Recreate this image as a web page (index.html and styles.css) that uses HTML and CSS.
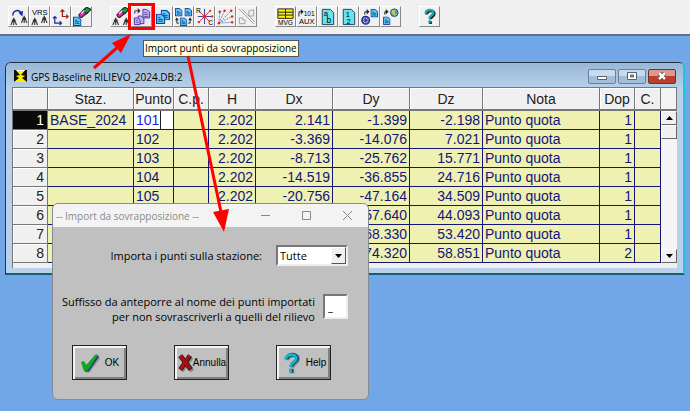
FILE: index.html
```html
<!DOCTYPE html>
<html lang="it">
<head>
    <meta charset="UTF-8">
    <meta name="viewport" content="width=device-width, initial-scale=1.0">
    <title>GPS Baseline RILIEVO_2024</title>
    <link rel="stylesheet" href="styles.css">
</head>
<body>
    <!-- shapes shared by several toolbar icons -->
    <svg class="symbols" aria-hidden="true">
        <symbol id="tripod" viewBox="0 0 8 8">
            <path d="M4 0V8M4 1L1 8M4 1L7 8M2 3H6" fill="none" stroke="#333" stroke-width="1.200"/>
        </symbol>
        <symbol id="eraser" viewBox="0 0 12 10">
            <path d="M1 7L6 2L9 5L4 9Q2 10 1 7Z" fill="#e622c4" stroke="#222" stroke-width="1"/>
            <path d="M5 3L8 0L12 2L8 6Z" fill="#18a040" stroke="#222" stroke-width="1"/>
            <path d="M3 6L6 3" stroke="#fff"/>
        </symbol>
        <symbol id="doc" viewBox="0 0 8 9">
            <path d="M.5 .5H5L7.500 3V8.500H.5Z" fill="#5cc8f4" stroke="#10409c"/>
            <path d="M2 3.500H4M2 5H6M2 6.500H6" stroke="#10409c" stroke-width=".8"/>
        </symbol>
    </svg>

    <div class="toolbar">
        <div class="group">
            <button class="tool" aria-label="Ruota stazioni">
                <svg viewBox="0 0 20 20"><use href="#tripod" x="1" y="11" width="8" height="8"/><use href="#tripod" x="12" y="9" width="8" height="8"/><path d="M4 9C4 3 11 2 13 7" fill="none" stroke="#10309c" stroke-width="1.500"/><path d="M10 6L14 10L15 4Z" fill="#10309c"/></svg>
            </button>
            <button class="tool" aria-label="VRS">
                <svg viewBox="0 0 20 20"><text x="2" y="8" font-size="8">VRS</text><use href="#tripod" x="1" y="11" width="8" height="8"/><use href="#tripod" x="11" y="9" width="8" height="8"/></svg>
            </button>
            <button class="tool" aria-label="Trasforma assi">
                <svg viewBox="0 0 20 20"><g fill="none" stroke-width="1.300"><path d="M4 10V17H11M2 12L4 10L6 12M9 15L11 17L9 19" stroke="#1c2c90"/><path d="M12 3V10H18M10 5L12 3L14 5M16 8L18 10L16 12" stroke="#a02020"/></g></svg>
            </button>
            <button class="tool" aria-label="Cancella documento">
                <svg viewBox="0 0 20 20"><use href="#doc" x="1" y="10" width="9" height="10"/><use href="#eraser" x="6" y="0" width="14" height="12"/></svg>
            </button>
        </div>
        <div class="group">
            <button class="tool" aria-label="Cancella stazioni">
                <svg viewBox="0 0 20 20"><use href="#tripod" x="1" y="11" width="8" height="8"/><use href="#tripod" x="12" y="11" width="8" height="8"/><use href="#eraser" x="5" y="0" width="14" height="12"/></svg>
            </button>
            <button class="tool marked" aria-label="Import punti da sovrapposizione" aria-describedby="tip">
                <svg viewBox="0 0 20 20"><g fill="#c4b4f0" stroke="#4830a0"><path d="M11.500 2.500H15L18.500 5V11.500H11.500ZM6.500 9.500H10L12.500 12V17.500H6.500Z"/><path d="M2.500 11.500H6L8.500 13.500V18.500H2.500Z"/><path d="M13 6H16M13 8H17M13 10H17M4 14H6M4 16H7" stroke-width=".8"/></g><path d="M3 7V4H7" fill="none" stroke="#333"/><path d="M6 1L9 4L6 7Z" fill="#333"/></svg>
            </button>
            <button class="tool" aria-label="Copia punti">
                <svg viewBox="0 0 20 20"><use href="#doc" x="8" y="3" width="10" height="11"/><use href="#doc" x="3" y="7" width="10" height="11"/></svg>
            </button>
            <button class="tool" aria-label="Scambia punti">
                <svg viewBox="0 0 20 20"><use href="#doc" x="1" y="1" width="8" height="9"/><use href="#doc" x="11" y="1" width="8" height="9"/><use href="#doc" x="6" y="11" width="8" height="9"/><path d="M3 13V17H5M15 17H17V12" fill="none" stroke="#222"/><path d="M15 14L17 11L19 14ZM1 14L3 11L5 14Z" fill="#222"/></svg>
            </button>
            <button class="tool" aria-label="Irradiamento">
                <svg viewBox="0 0 20 20"><path d="M10 2V18M3 10H18" stroke="#2040a8"/><path d="M4 4L16 16M16 4L4 16" stroke="#e02828"/><path d="M8 10H12M10 8V12" stroke="#e02828" stroke-width="2"/><circle cx="16" cy="4" r="1.200" fill="#e02828"/><circle cx="18" cy="10" r="1.200" fill="#e02828"/><circle cx="4" cy="16" r="1.200" fill="#e02828"/><text x="1" y="6" font-size="7">R</text><text x="14" y="19" font-size="7">C</text></svg>
            </button>
            <button class="tool" aria-label="Raggi">
                <svg viewBox="0 0 20 20"><path d="M3 17L4 5M3 17L9 4M3 17L16 4M3 17L17 10M3 17L17 16" stroke="#5868b8" stroke-width=".8" stroke-dasharray="2 1"/><g fill="#e02828"><circle cx="4" cy="5" r="1.300"/><circle cx="9" cy="4" r="1.300"/><circle cx="16" cy="4" r="1.300"/><circle cx="17" cy="10" r="1.300"/><circle cx="17" cy="16" r="1.300"/><circle cx="3" cy="17" r="1.300"/></g></svg>
            </button>
            <button class="tool" aria-label="Particelle" disabled>
                <svg viewBox="0 0 20 20"><path d="M2 2L18 18M5 2L19 16M12.500 4L17.500 3V9.500H12.500ZM2.500 11.500H6V13.500H8.500V17.500H2.500Z" fill="none" stroke="#a0a0a0"/></svg>
            </button>
        </div>
        <div class="group">
            <button class="tool" aria-label="MVG">
                <svg viewBox="0 0 20 20"><path d="M2 2H18V12H2Z" fill="#ffee00" stroke="#222"/><path d="M2 5.500H18M2 8.500H18M10 2V12" stroke="#222"/><text x="2" y="19" font-size="7">MVG</text></svg>
            </button>
            <button class="tool" aria-label="101 AUX">
                <svg viewBox="0 0 20 20"><path d="M2 10V5H5" fill="none" stroke="#222"/><path d="M4 2L7 5L4 8Z" fill="#222"/><text x="7" y="9" font-size="7">101</text><text x="2" y="18" font-size="8">AUX</text></svg>
            </button>
            <button class="tool" aria-label="Ordine alfabetico">
                <svg viewBox="0 0 20 20"><path d="M4.500 2.500H13L16.500 6V18.500H4.500Z" fill="#68e4ec" stroke="#1c4060"/><text x="6" y="9" font-size="8">a</text><text x="9" y="17" font-size="9">b</text></svg>
            </button>
            <button class="tool" aria-label="Ordine numerico">
                <svg viewBox="0 0 20 20"><path d="M4.500 2.500H13L16.500 6V18.500H4.500Z" fill="#68e4ec" stroke="#1c4060"/><text x="7" y="10" font-size="8">1</text><text x="8" y="18" font-size="8">2</text></svg>
            </button>
            <button class="tool" aria-label="Da satellite a documento">
                <svg viewBox="0 0 20 20"><circle cx="6" cy="14" r="4" fill="#b8c0f0" stroke="#202890" stroke-width="1.500"/><path d="M6 10V18M2 14H10M3 11L9 17M9 11L3 17" stroke="#202890" stroke-width=".8"/><use href="#doc" x="11" y="2" width="8" height="9"/><path d="M5 8V5H8" fill="none" stroke="#222"/><path d="M7 2L10 5L7 8Z" fill="#222"/></svg>
            </button>
            <button class="tool" aria-label="Da documento a mappa">
                <svg viewBox="0 0 20 20"><use href="#doc" x="2" y="10" width="8" height="9"/><circle cx="14" cy="6" r="4" fill="#38a8e0" stroke="#205070"/><path d="M12 3L15 4L14 7L17 8L14 9L11 6Z" fill="#e8c030"/><path d="M4 8V5H6" fill="none" stroke="#222"/><path d="M5 2L8 5L5 8Z" fill="#222"/></svg>
            </button>
        </div>
        <div class="group">
            <button class="tool" aria-label="Guida">
                <svg viewBox="0 0 20 20"><g transform="translate(1 1)" fill="none" stroke="#222" stroke-width="3"><path d="M6 7C6 2 14 2 14 6C14 9 10 9 10 12M10 14V17"/></g><path d="M6 7C6 2 14 2 14 6C14 9 10 9 10 12M10 14V17" fill="none" stroke="#18a8b8" stroke-width="2.500"/></svg>
            </button>
        </div>
    </div>

    <div class="desktop">
        <div class="window">
            <div class="titlebar">
                <svg class="app-icon" viewBox="0 0 13 12"><path d="M0 0H13V12H0Z" fill="#ffee00"/><path d="M0 0H2L6 5L2 6L5 8L0 12ZM13 0H11L7 5L11 6L8 8L13 12Z" fill="#111"/><path d="M2 0H11L9 2H4Z" fill="#fff"/><path d="M3 1L6.500 5L10 1Z" fill="#ffee00"/></svg>
                <span class="window-title">GPS Baseline RILIEVO_2024.DB:2</span>
                <button class="aero" aria-label="Riduci a icona"><svg viewBox="0 0 10 8"><path d="M.5 4.500H9.500V7.500H.5Z" fill="#fff" stroke="#56616e"/></svg></button>
                <button class="aero" aria-label="Ingrandisci"><svg viewBox="0 0 10 8"><path d="M.5 .5H9.500V7.500H.5Z" fill="#fff" stroke="#56616e"/><path d="M3.500 3H6.500V5H3.500Z" fill="#8aa" stroke="#56616e"/></svg></button>
                <button class="aero aero-close" aria-label="Chiudi"><svg viewBox="0 0 10 8"><path d="M2 1L8 7M8 1L2 7" stroke="#5c3a3a" stroke-width="4"/><path d="M2 1L8 7M8 1L2 7" stroke="#fff" stroke-width="2.500"/></svg></button>
            </div>
            <div class="sheet">
                <table class="grid">
                    <colgroup>
                        <col class="c-num"><col class="c-staz"><col class="c-punto"><col class="c-cp"><col class="c-h"><col class="c-dx"><col class="c-dx"><col class="c-dz"><col><col class="c-dop"><col class="c-c">
                    </colgroup>
                    <thead>
                        <tr><th></th><th>Staz.</th><th>Punto</th><th>C.p.</th><th>H</th><th>Dx</th><th>Dy</th><th>Dz</th><th>Nota</th><th>Dop</th><th>C.</th></tr>
                    </thead>
                    <tbody>
                        <tr class="current"><th>1</th><td>BASE_2024</td><td class="editing"><input class="cell-input" type="text" value="101" aria-label="Punto"></td><td></td><td class="n">2.202</td><td class="n">2.141</td><td class="n">-1.399</td><td class="n">-2.198</td><td>Punto quota</td><td class="n">1</td><td></td></tr>
                        <tr><th>2</th><td></td><td>102</td><td></td><td class="n">2.202</td><td class="n">-3.369</td><td class="n">-14.076</td><td class="n">7.021</td><td>Punto quota</td><td class="n">1</td><td></td></tr>
                        <tr><th>3</th><td></td><td>103</td><td></td><td class="n">2.202</td><td class="n">-8.713</td><td class="n">-25.762</td><td class="n">15.771</td><td>Punto quota</td><td class="n">1</td><td></td></tr>
                        <tr><th>4</th><td></td><td>104</td><td></td><td class="n">2.202</td><td class="n">-14.519</td><td class="n">-36.855</td><td class="n">24.716</td><td>Punto quota</td><td class="n">1</td><td></td></tr>
                        <tr><th>5</th><td></td><td>105</td><td></td><td class="n">2.202</td><td class="n">-20.756</td><td class="n">-47.164</td><td class="n">34.509</td><td>Punto quota</td><td class="n">1</td><td></td></tr>
                        <tr><th>6</th><td></td><td></td><td></td><td></td><td></td><td class="n">-57.640</td><td class="n">44.093</td><td>Punto quota</td><td class="n">1</td><td></td></tr>
                        <tr><th>7</th><td></td><td></td><td></td><td></td><td></td><td class="n">-68.330</td><td class="n">53.420</td><td>Punto quota</td><td class="n">1</td><td></td></tr>
                        <tr><th>8</th><td></td><td></td><td></td><td></td><td></td><td class="n">-74.320</td><td class="n">58.851</td><td>Punto quota</td><td class="n">2</td><td></td></tr>
                    </tbody>
                </table>
                <div class="scroll">
                    <div class="scroll-head"></div>
                    <button class="scroll-btn" aria-label="Su"><svg viewBox="0 0 7 4"><path d="M0 4L3.500 0L7 4Z"/></svg></button>
                    <div class="scroll-thumb"></div>
                    <div class="scroll-track"></div>
                    <button class="scroll-btn" aria-label="Giù"><svg viewBox="0 0 7 4"><path d="M0 0H7L3.500 4Z"/></svg></button>
                </div>
            </div>
        </div>
    </div>

    <div class="tooltip" id="tip" role="tooltip">Import punti da sovrapposizione</div>

    <form class="dialog">
        <div class="dialog-bar">
            <span class="dialog-title">-- Import da sovrapposizione --</span>
            <button type="button" class="caption" aria-label="Riduci a icona"><svg viewBox="0 0 9 9"><path d="M0 4.500H9"/></svg></button>
            <button type="button" class="caption" aria-label="Ingrandisci"><svg viewBox="0 0 9 9"><path d="M.5 .5H8.500V8.500H.5Z"/></svg></button>
            <button type="button" class="caption" aria-label="Chiudi"><svg viewBox="0 0 9 9"><path d="M0 0L9 9M9 0L0 9"/></svg></button>
        </div>
        <div class="dialog-body">
            <div class="field field-station">
                <label for="stazione">Importa i punti sulla stazione:</label>
                <span class="combo">
                    <select id="stazione"><option>Tutte</option></select>
                    <span class="combo-arrow"><svg viewBox="0 0 7 4"><path d="M0 0H7L3.500 4Z"/></svg></span>
                </span>
            </div>
            <div class="field">
                <label for="suffisso">Suffisso da anteporre al nome dei punti importati<br>per non sovrascriverli a quelli del rilievo</label>
                <input class="suffix" id="suffisso" type="text" value="_">
            </div>
            <div class="actions">
                <button type="button" class="action">
                    <svg viewBox="0 0 22 22"><path d="M3 11L8 14L18 3L21 6L10 21H6Z" fill="#8c8c8c"/><path d="M2 10L6 14L17 2L20 4L9 20H5Z" fill="#1c2c90"/><path d="M1 10L4 9L7 13L16 2L19 3L8 19H4Z" fill="#10a81c"/></svg>
                    <span>OK</span>
                </button>
                <button type="button" class="action action-cancel">
                    <svg viewBox="0 0 22 22"><path d="M6 4L19 21M18 4L6 21" stroke="#8c8c8c" stroke-width="5"/><path d="M4 2L17 19M16 2L4 19" stroke="#222" stroke-width="6"/><path d="M4 2L16 18M15 2L4 19" stroke="#b00c14" stroke-width="4"/></svg>
                    <span>Annulla</span>
                </button>
                <button type="button" class="action">
                    <svg viewBox="0 0 22 22"><g fill="none" stroke-width="4"><path d="M7 8C7 2 18 2 18 7C18 11 12 11 12 16M12 18V22" stroke="#8c8c8c"/><path d="M6 7C6 1 17 1 17 6C17 10 11 10 11 15M11 17V21" stroke="#1c3c70"/><path d="M5 7C5 1 16 1 16 6C16 10 10 10 10 15M10 17V21" stroke="#10b8c8" stroke-width="3"/></g></svg>
                    <span>Help</span>
                </button>
            </div>
        </div>
    </form>

    <svg class="arrows" width="240" height="240" viewBox="0 0 240 240" aria-hidden="true">
        <path d="M94 68L119 46M188 56L221 212" stroke="#f00" stroke-width="3"/>
        <path d="M131 34L112 43L121 53ZM224 232L213 212L229 209Z" fill="#f00"/>
    </svg>
</body>
</html>
```

FILE: styles.css
```css
* {
    box-sizing: border-box;
}

body {
    margin: 0;
    min-height: 100vh;
    position: relative;
    overflow: hidden;
    background: #71a6e8;
    font-family: "Open Sans", "Noto Sans", sans-serif;
    font-size: 11px;
    color: #000;
}

button, input, select {
    font: inherit;
    color: inherit;
    margin: 0;
    padding: 0;
}

svg {
    display: block;
}

.symbols {
    position: absolute;
    width: 0;
    height: 0;
}

/* toolbar */
.toolbar {
    display: flex;
    gap: 18px;
    height: 36px;
    padding: 6px 8px 0;
    background: #f0f0f0;
    border-bottom: 2px solid #5d6f85;
}

.group {
    display: flex;
}

.tool {
    width: 21px;
    height: 21px;
    background: #f0f0f0;
    border: 1px solid;
    border-color: #fff #888 #888 #fff;
}

.tool svg {
    width: 19px;
    height: 19px;
    font-family: "Liberation Sans", sans-serif;
}

.marked {
    background: #f4e4f8;
    outline: 3px solid #f00;
    z-index: 1;
}

/* baseline window */
.desktop {
    padding: 26px 5px 0;
}

.window {
    padding: 0 6px 5px;
    background: #b9d1ea;
    border: 1px solid #22303e;
    border-right: 2px solid #22c4dc;
    border-bottom: 2px solid #116070;
    border-radius: 6px 6px 0 0;
    box-shadow: inset 0 1px 0 #dfeaf6;
}

.titlebar {
    display: flex;
    align-items: center;
    gap: 2px;
    height: 24px;
    margin: 0 -6px;
    padding: 2px 7px 0 8px;
    background: linear-gradient(#9ab7d5, #b5cfe8);
    border-radius: 5px 5px 0 0;
}

.app-icon {
    width: 13px;
    height: 12px;
}

.window-title {
    flex: 1;
    padding-left: 2px;
    padding-top: 2px;
    font-size: 10px;
}

.aero {
    display: flex;
    align-items: center;
    justify-content: center;
    width: 28px;
    height: 15px;
    background: linear-gradient(#c9dbee 45%, #a3bdd8 50%);
    border: 1px solid #6c7f96;
    border-radius: 2px;
}

.aero svg {
    width: 10px;
    height: 8px;
}

.aero-close {
    background: linear-gradient(#dd9a8c 45%, #b8402c 50%);
    border-color: #70342c;
}

.sheet {
    display: flex;
    padding-bottom: 5px;
    background: #f0f0f0;
    border-top: 1px solid #777;
    border-left: 1px solid #777;
}

.grid {
    flex: 1;
    table-layout: fixed;
    border-collapse: separate;
    border-spacing: 0;
    font: 14px/18px "Liberation Sans", Arial, sans-serif;
    color: #14147c;
}

.c-num { width: 35px; }
.c-staz { width: 86px; }
.c-punto { width: 40px; }
.c-cp { width: 35px; }
.c-h { width: 47px; }
.c-dx { width: 77px; }
.c-dz { width: 73px; }
.c-dop { width: 35px; }
.c-c { width: 26px; }

.grid th {
    height: 19px;
    padding: 0;
    background: #f0f0f0;
    border-right: 1px solid #777;
    border-bottom: 1px solid #777;
    box-shadow: inset 1px 1px 0 #fff;
    color: #222;
    font-weight: normal;
}

.grid thead th {
    height: 23px;
    border-bottom-width: 2px;
}

.grid tbody th {
    padding-right: 3px;
    text-align: right;
}

.grid .current th {
    background: #0a0a0a;
    box-shadow: none;
    color: #fff;
}

.grid td {
    height: 19px;
    padding: 0 2px;
    background: #eef1b2;
    border-right: 1px solid #14147c;
    border-bottom: 1px solid #14147c;
    white-space: nowrap;
}

.grid .n {
    text-align: right;
}

.grid .editing {
    padding: 0;
    background: #fff;
}

.cell-input {
    display: block;
    width: 27px;
    height: 18px;
    padding-left: 2px;
    border: 0;
    border-right: 1px solid #222;
    background: #fff;
    color: #2424e0;
}

.scroll {
    display: flex;
    flex-direction: column;
    width: 16px;
    background: #f4f4f4;
}

.scroll-head {
    height: 23px;
    border-right: 1px solid #777;
    border-bottom: 2px solid #777;
}

.scroll-btn, .scroll-thumb {
    height: 14px;
    background: #f0f0f0;
    border: 1px solid;
    border-color: #fff #666 #666 #fff;
}

.scroll-btn svg {
    width: 7px;
    height: 4px;
    margin: 0 auto;
}

.scroll-track {
    flex: 1;
}

.tooltip {
    position: absolute;
    left: 143px;
    top: 40px;
    padding: 0 1px;
    background: #ffffe1;
    border: 1px solid #555;
    line-height: 15px;
    font-size: 10px;
}

/* import dialog */
.dialog {
    position: absolute;
    left: 52px;
    top: 203px;
    width: 317px;
    background: #c0c0c0;
    border: 1px solid #858b92;
    border-radius: 6px;
    overflow: hidden;
}

.dialog-bar {
    display: flex;
    align-items: center;
    height: 23px;
    padding-left: 3px;
    background: #f3f3f3;
}

.dialog-title {
    flex: 1;
    color: #8a8a8a;
    font-size: 10px;
}

.caption {
    display: flex;
    align-items: center;
    justify-content: center;
    width: 41px;
    height: 23px;
    border: 0;
    background: none;
}

.caption svg {
    width: 9px;
    height: 9px;
    fill: none;
    stroke: #888;
}

.dialog-body {
    padding: 18px 20px 19px 8px;
}

.field {
    display: flex;
    justify-content: flex-end;
    gap: 8px;
    margin-bottom: 21px;
    line-height: 15px;
    text-align: right;
    white-space: nowrap;
}

.field-station {
    align-items: center;
    gap: 14px;
    margin-bottom: 28px;
}

.combo {
    display: flex;
    width: 72px;
    height: 21px;
    background: #fff;
    border: 2px solid;
    border-color: #777 #eee #eee #777;
    position: relative;
}

.combo select {
    flex: 1;
    appearance: none;
    border: 0;
    padding-left: 2px;
    background: #fff;
}

.combo-arrow {
    position: absolute;
    right: 0;
    top: 0;
    bottom: 0;
    width: 15px;
    display: flex;
    align-items: center;
    justify-content: center;
    background: #f0f0f0;
    border: 1px solid;
    border-color: #fff #555 #555 #fff;
    pointer-events: none;
}

.combo-arrow svg {
    width: 7px;
    height: 4px;
}

.suffix {
    width: 25px;
    height: 25px;
    padding-left: 3px;
    background: #fff;
    border: 2px solid;
    border-color: #777 #eee #eee #777;
}

.actions {
    display: flex;
    justify-content: space-between;
    padding: 0 17px 0 11px;
}

.action {
    display: flex;
    align-items: center;
    justify-content: center;
    gap: 4px;
    width: 55px;
    height: 35px;
    background: #c0c0c0;
    border: 1px solid #222;
    box-shadow: inset 2px 2px 0 #f4f4f4, inset -2px -2px 0 #808080;
    font: 10px "Liberation Sans", Arial, sans-serif;
}

.action svg {
    width: 21px;
    height: 22px;
}

.action-cancel {
    gap: 0;
}

.action-cancel svg {
    width: 18px;
    margin-right: -2px;
}

.arrows {
    position: absolute;
    left: 0;
    top: 0;
    pointer-events: none;
    z-index: 2;
}
```
